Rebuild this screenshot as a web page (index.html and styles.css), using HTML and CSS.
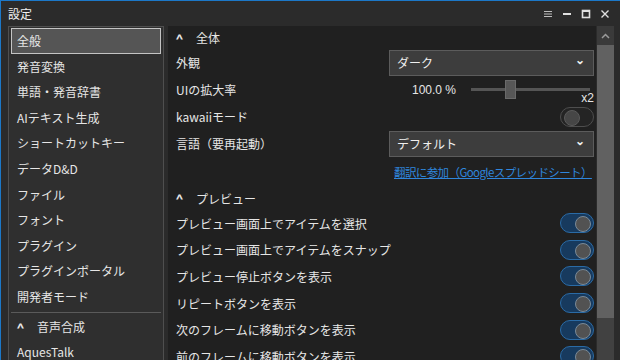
FILE: index.html
```html
<!DOCTYPE html>
<html lang="ja">

<head>
  <meta charset="UTF-8">
  <title>設定</title>
  <link rel="stylesheet" href="styles.css">
</head>

<body>
  <div class="window">
    <!-- タイトルバー -->
    <div class="titlebar">
      <span class="title">設定</span>
      <div class="controls">
        <svg width="10" height="10" viewBox="0 0 10 10"><path d="M1 2.5h8M1 5h8M1 7.5h8" stroke="#bdbdbd" stroke-width="1.2"/></svg>
        <svg width="10" height="10" viewBox="0 0 10 10"><path d="M1 5h8" stroke="#e0e0e0" stroke-width="2"/></svg>
        <svg width="10" height="10" viewBox="0 0 10 10"><rect x="1.5" y="1.5" width="7" height="7" fill="none" stroke="#e0e0e0" stroke-width="1.6"/><path d="M1.5 2h7" stroke="#e0e0e0" stroke-width="2"/></svg>
        <svg width="10" height="10" viewBox="0 0 10 10"><path d="M1.5 1.5l7 7M8.5 1.5l-7 7" stroke="#e0e0e0" stroke-width="1.4"/></svg>
      </div>
    </div>

    <div class="main">
      <!-- サイドバー -->
      <ul class="sidebar">
        <li class="active">全般</li>
        <li>発音変換</li>
        <li>単語・発音辞書</li>
        <li>AIテキスト生成</li>
        <li>ショートカットキー</li>
        <li>データD&amp;D</li>
        <li>ファイル</li>
        <li>フォント</li>
        <li>プラグイン</li>
        <li>プラグインポータル</li>
        <li>開発者モード</li>
        <li class="sep"></li>
        <li class="group"><span class="caret">^</span>音声合成</li>
        <li>AquesTalk</li>
      </ul>

      <!-- 内容 -->
      <div class="content">
        <div class="pane">
          <div class="head"><span class="caret">^</span>全体</div>

          <div class="row">
            <span>外観</span>
            <div class="select">ダーク<span class="chev">⌄</span></div>
          </div>
          <div class="row">
            <span>UIの拡大率</span>
            <div class="scale">
              <span class="value">100.0 %</span>
              <div class="slider"><div class="thumb"></div></div>
              <span class="max">x2</span>
            </div>
          </div>
          <div class="row">
            <span>kawaiiモード</span>
            <div class="toggle"></div>
          </div>
          <div class="row">
            <span>言語（要再起動）</span>
            <div class="select">デフォルト<span class="chev">⌄</span></div>
          </div>
          <div class="row link-row">
            <a class="link" href="#">翻訳に参加（Googleスプレッドシート）</a>
          </div>

          <div class="head head2"><span class="caret">^</span>プレビュー</div>

          <div class="row sm"><span>プレビュー画面上でアイテムを選択</span><div class="toggle on"></div></div>
          <div class="row sm"><span>プレビュー画面上でアイテムをスナップ</span><div class="toggle on"></div></div>
          <div class="row sm"><span>プレビュー停止ボタンを表示</span><div class="toggle on"></div></div>
          <div class="row sm"><span>リピートボタンを表示</span><div class="toggle on"></div></div>
          <div class="row sm"><span>次のフレームに移動ボタンを表示</span><div class="toggle on"></div></div>
          <div class="row sm"><span>前のフレームに移動ボタンを表示</span><div class="toggle on"></div></div>
        </div>

        <div class="scrollbar">
          <div class="up"><svg width="9" height="6" viewBox="0 0 9 6"><path d="M1 5l3.5-3.5L8 5" fill="none" stroke="#9a9a9a" stroke-width="1.5"/></svg></div>
          <div class="bar"></div>
          <div class="rest"></div>
        </div>
      </div>
    </div>
  </div>
</body>

</html>
```

FILE: styles.css
```css
* {
  margin: 0;
  padding: 0;
  box-sizing: border-box;
}

body {
  width: 620px;
  height: 360px;
  overflow: hidden;
  background-color: #2b2b2b;
  font-family: "Noto Sans CJK JP", "Noto Sans", sans-serif;
  font-size: 12px;
  color: #e6e6e6;
}

.window {
  display: flex;
  flex-direction: column;
  width: 620px;
  height: 360px;
  border-top: 1px solid #1c78c8;
  border-left: 1px solid #1c78c8;
  background-color: #2b2b2b;
}

.titlebar {
  display: flex;
  align-items: center;
  justify-content: space-between;
  height: 25px;
  padding: 0 10px 0 7px;
  flex-shrink: 0;
}

.title {
  font-size: 12px;
  color: #f0f0f0;
}

.controls {
  display: flex;
  gap: 9px;
  align-items: center;
}

.main {
  display: flex;
  flex: 1;
  min-height: 0;
  padding-left: 7px;
}

/* サイドバー */
.sidebar {
  list-style: none;
  width: 156px;
  flex-shrink: 0;
  background-color: #2f2f2f;
  border: 1px solid #4f4f4f;
  border-bottom: none;
  padding: 1px 2px;
  overflow: hidden;
}

.sidebar li {
  height: 25.6px;
  line-height: 25.6px;
  padding-left: 6px;
  white-space: nowrap;
  color: #e6e6e6;
}

.sidebar li.active {
  background-color: #555555;
  border: 1px solid #c4c4c4;
  line-height: 23.6px;
  padding-left: 5px;
}

.sidebar li.sep {
  height: 3px;
  margin-top: 2px;
  border-top: 1px solid #5a5a5a;
}

.sidebar li.group {
  height: 24px;
  line-height: 24px;
  padding-left: 8px;
}

.caret {
  display: inline-block;
  width: 18px;
  font-weight: bold;
  font-size: 11px;
  transform: scaleX(1.3);
}

/* 内容 */
.content {
  display: flex;
  flex: 1;
  margin-left: 4px;
  padding-right: 6px;
  min-width: 0;
}

.pane {
  flex: 1;
  background-color: #202020;
  padding: 0 2px 0 8px;
  overflow: hidden;
}

.head {
  display: flex;
  align-items: center;
  height: 23px;
  padding-left: 2px;
}

.head2 {
  height: 24px;
}

.row {
  display: flex;
  align-items: center;
  justify-content: space-between;
  height: 27px;
  white-space: nowrap;
}

.row.sm {
  height: 26.6px;
}

.select {
  position: relative;
  width: 205px;
  height: 26px;
  line-height: 24px;
  padding-left: 7px;
  background-color: #3d3d3d;
  border: 1px solid #5c5c5c;
  color: #f0f0f0;
}

.chev {
  position: absolute;
  right: 8px;
  top: -4px;
  font-size: 12px;
  font-weight: bold;
}

.scale {
  position: relative;
  display: flex;
  align-items: center;
  width: 205px;
  height: 100%;
}

.value {
  width: 67px;
  text-align: right;
  font-family: "Liberation Sans", sans-serif;
}

.slider {
  position: relative;
  margin-left: 15px;
  width: 119px;
  height: 3px;
  background-color: #555555;
}

.thumb {
  position: absolute;
  left: 34px;
  top: -8px;
  width: 11px;
  height: 19px;
  background-color: #575757;
  border: 1px solid #6a6a6a;
}

.max {
  position: absolute;
  right: 0;
  bottom: -2px;
  font-family: "Liberation Sans", sans-serif;
  font-size: 12px;
}

.toggle {
  position: relative;
  width: 34px;
  height: 20px;
  border-radius: 10px;
  border: 1px solid #4e4e4e;
  background-color: #242424;
}

.toggle::after {
  content: "";
  position: absolute;
  left: 3px;
  top: 2px;
  width: 14px;
  height: 14px;
  border-radius: 50%;
  background-color: #464646;
  border: 1px solid #5a5a5a;
}

.toggle.on {
  background-color: #173a5e;
  border-color: #2a6ba6;
}

.toggle.on::after {
  left: auto;
  right: 2px;
  background-color: #525252;
  border-color: #7a8a98;
}

.link-row {
  height: 29px;
  justify-content: flex-end;
}

.link {
  width: 200px;
  color: #2f86dc;
  text-decoration: underline;
  font-size: 11.5px;
  letter-spacing: -0.6px;
  white-space: nowrap;
}

/* スクロールバー */
.scrollbar {
  display: flex;
  flex-direction: column;
  width: 17px;
  margin-left: 1px;
  background-color: #3e3e3e;
}

.up {
  display: flex;
  align-items: center;
  justify-content: center;
  height: 19px;
  background-color: #3a3a3a;
}

.bar {
  height: 273px;
  background-color: #616161;
}

.rest {
  flex: 1;
  background-color: #414141;
}
```
